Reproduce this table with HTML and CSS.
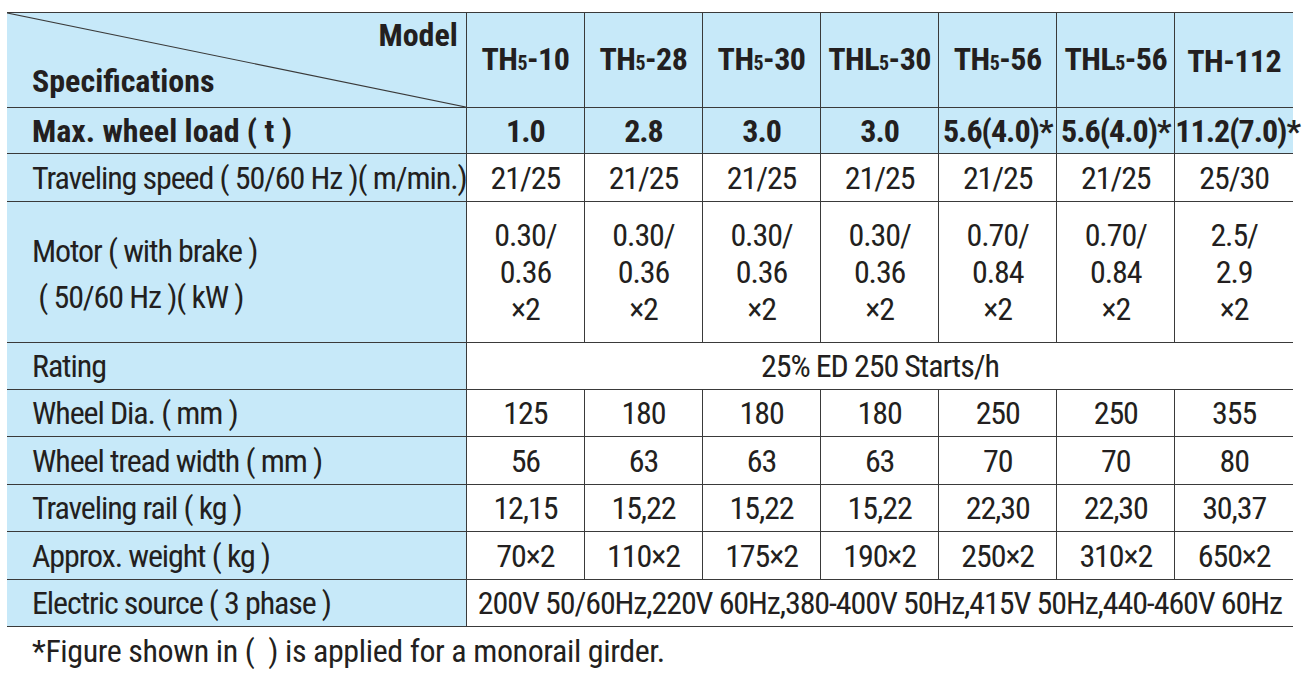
FILE: index.html
```html
<!DOCTYPE html>
<html lang="en">
<head>
<meta charset="utf-8">
<title>Specifications</title>
<link rel="stylesheet" href="styles.css">
</head>
<body>
<div class="page">
  <table class="spec">
    <colgroup>
      <col class="c-label">
      <col class="c-model"><col class="c-model"><col class="c-model"><col class="c-model"><col class="c-model"><col class="c-model"><col class="c-model">
    </colgroup>
    <thead>
      <tr class="r-head">
        <th class="corner">
          <svg class="diag" viewBox="0 0 100 100" preserveAspectRatio="none" aria-hidden="true"><line x1="0" y1="0" x2="100" y2="100" stroke="#3a3a3a" stroke-width="1.2" vector-effect="non-scaling-stroke"/></svg>
          <div class="corner-inner">
            <span class="corner-model">Model</span>
            <span class="corner-spec">Specifications</span>
          </div>
        </th>
        <th class="model">TH<span class="sub">5</span>-10</th>
        <th class="model">TH<span class="sub">5</span>-28</th>
        <th class="model">TH<span class="sub">5</span>-30</th>
        <th class="model">THL<span class="sub">5</span>-30</th>
        <th class="model">TH<span class="sub">5</span>-56</th>
        <th class="model">THL<span class="sub">5</span>-56</th>
        <th class="model">TH-112</th>
      </tr>
      <tr class="r-load">
        <th class="label">Max. wheel load ( t )</th>
        <th class="load">1.0</th>
        <th class="load">2.8</th>
        <th class="load">3.0</th>
        <th class="load">3.0</th>
        <th class="load">5.6(4.0)*</th>
        <th class="load">5.6(4.0)*</th>
        <th class="load">11.2(7.0)*</th>
      </tr>
    </thead>
    <tbody>
      <tr class="r-tall">
        <th class="label">Traveling speed ( 50/60 Hz )( m/min.)</th>
        <td>21/25</td><td>21/25</td><td>21/25</td><td>21/25</td><td>21/25</td><td>21/25</td><td>25/30</td>
      </tr>
      <tr class="r-motor">
        <th class="label label-motor">Motor ( with brake )<br>&nbsp;( 50/60 Hz )( kW )</th>
        <td class="stack">0.30/<br>0.36<br>×2</td>
        <td class="stack">0.30/<br>0.36<br>×2</td>
        <td class="stack">0.30/<br>0.36<br>×2</td>
        <td class="stack">0.30/<br>0.36<br>×2</td>
        <td class="stack">0.70/<br>0.84<br>×2</td>
        <td class="stack">0.70/<br>0.84<br>×2</td>
        <td class="stack">2.5/<br>2.9<br>×2</td>
      </tr>
      <tr class="r-std">
        <th class="label">Rating</th>
        <td colspan="7">25% ED 250 Starts/h</td>
      </tr>
      <tr class="r-std">
        <th class="label">Wheel Dia. ( mm )</th>
        <td>125</td><td>180</td><td>180</td><td>180</td><td>250</td><td>250</td><td>355</td>
      </tr>
      <tr class="r-tall">
        <th class="label">Wheel tread width ( mm )</th>
        <td>56</td><td>63</td><td>63</td><td>63</td><td>70</td><td>70</td><td>80</td>
      </tr>
      <tr class="r-std">
        <th class="label">Traveling rail ( kg )</th>
        <td>12,15</td><td>15,22</td><td>15,22</td><td>15,22</td><td>22,30</td><td>22,30</td><td>30,37</td>
      </tr>
      <tr class="r-tall">
        <th class="label">Approx. weight ( kg )</th>
        <td>70×2</td><td>110×2</td><td>175×2</td><td>190×2</td><td>250×2</td><td>310×2</td><td>650×2</td>
      </tr>
      <tr class="r-std r-last">
        <th class="label">Electric source ( 3 phase )</th>
        <td colspan="7">200V 50/60Hz,220V 60Hz,380-400V 50Hz,415V 50Hz,440-460V 60Hz</td>
      </tr>
    </tbody>
  </table>
  <p class="note">*Figure shown in (&nbsp;&nbsp;) is applied for a monorail girder.</p>
</div>
</body>
</html>
```

FILE: styles.css
```css
html, body {
  margin: 0;
  background: #ffffff;
}

body {
  font-family: "Roboto", "Liberation Sans Narrow", "Arial Narrow", sans-serif;
  font-stretch: 75%;
  color: #231f20;
}

.page {
  padding: 12px 0 0 7px;
}

.spec {
  border-collapse: collapse;
  table-layout: fixed;
  width: 1286px;
  font-size: 32px;
  letter-spacing: -1.1px;
}

.c-label { width: 459px; }
.c-model { width: 118px; }

.spec th,
.spec td {
  padding: 0;
  border: 1px solid #3a3a3a;
  text-align: center;
  vertical-align: middle;
  line-height: 38px;
  white-space: nowrap;
}

.spec th { font-weight: normal; }

.spec tr > :first-child { border-left: none; }
.spec tr > :last-child { border-right: none; }

.spec thead th {
  background: #c7e9f9;
  font-weight: bold;
  letter-spacing: 0;
}

.spec .label {
  background: #c7e9f9;
  text-align: left;
  padding-left: 25px;
}

.r-head > * {
  border-top: 3px solid #2e2e2e;
  height: 94px;
}

.spec .model {
  height: 92px;
  padding-top: 2px;
  letter-spacing: -0.5px;
}

.spec .load {
  letter-spacing: -1px;
}

.r-load > * {
  height: 45px;
  border-bottom: 3px solid #2e2e2e;
}

.r-std > * { height: 46px; }
.r-tall > * { height: 47px; }

.r-motor > * { height: 140px; }

.r-last > * { border-bottom: 3px solid #2e2e2e; }

.sub {
  font-size: 0.62em;
  font-weight: bold;
}

.corner {
  position: relative;
}

.corner .diag {
  position: absolute;
  left: 0;
  top: 0;
  width: 100%;
  height: 100%;
}

.corner-inner {
  display: flex;
  flex-direction: column;
  justify-content: space-between;
  height: 94px;
  padding: 4px 8px 8px 25px;
  box-sizing: border-box;
  line-height: 36px;
}

.corner-model { align-self: flex-end; }
.corner-spec { align-self: flex-start; }

.spec .label-motor {
  line-height: 46px;
  height: 136px;
  padding-top: 4px;
}

.spec .stack {
  line-height: 37px;
  height: 139px;
  padding-top: 1px;
}

.note {
  margin: 6px 0 0 0;
  padding-left: 25px;
  font-size: 32px;
  letter-spacing: -0.4px;
  line-height: 36px;
}
```
